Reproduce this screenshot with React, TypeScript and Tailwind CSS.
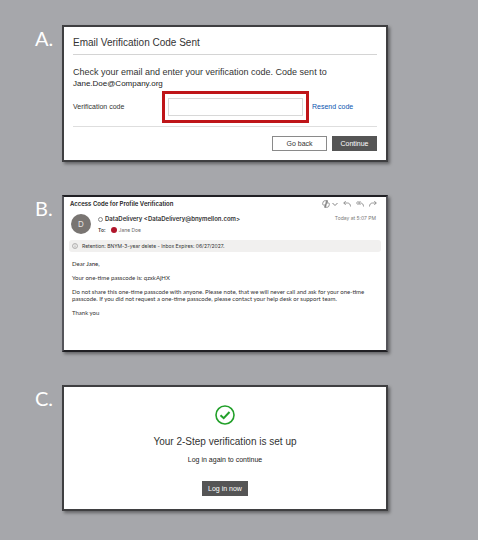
import React from "react";

const panelClass =
  "min-w-0 flex-1 border-2 bg-white shadow-[2px_2px_3px_rgba(0,0,0,0.4)]";

const bodyParagraphs = [
  "Your one-time passcode is: qzxkAjHX",
  "Do not share this one-time passcode with anyone. Please note, that we will never call and ask for your one-time passcode. If you did not request a one-time passcode, please contact your help desk or support team.",
  "Thank you",
];

type StepProps = {
  label: string;
  children: React.ReactNode;
};

const Step = ({ label, children }: StepProps) => (
  <section className="flex items-start">
    <h2 className="w-[27px] shrink-0 pt-px font-['Lato',sans-serif] text-[20px] leading-6 text-white">
      {label}
    </h2>
    {children}
  </section>
);

const CodeForm = () => (
  <form
    className={`${panelClass} border-[#3f3f41] px-[9px] pb-[9px] font-['Liberation_Sans',Arial,sans-serif] text-[#333333]`}
    onSubmit={(e) => e.preventDefault()}
  >
    <h3 className="border-b border-[#d4d4d4] pt-[10px] pb-[5px] text-[10px] leading-3">
      Email Verification Code Sent
    </h3>
    <p className="pt-3 text-[9px] leading-[11px]">
      Check your email and enter your verification code. Code sent to
    </p>
    <p className="text-[8px] leading-[11px] text-[#222222]">
      Jane.Doe@Company.org
    </p>
    <div className="flex items-center border-b border-[#dedede] pt-[2px] pb-[3px]">
      <label htmlFor="code" className="w-[89px] shrink-0 text-[7px]">
        Verification code
      </label>
      <div className="mr-[3px] min-w-0 flex-1 border-[3px] border-[#bf1519] px-[3px] py-1">
        <input
          id="code"
          type="text"
          className="block h-[18px] w-full border border-[#d8d8d8] px-1 text-[8px] outline-none"
        />
      </div>
      <a href="#resend" className="w-[65px] shrink-0 text-[7px] text-[#0a55b0]">
        Resend code
      </a>
    </div>
    <div className="flex justify-end gap-[5px] pt-[9px]">
      <button
        type="button"
        className="h-[15px] w-[55px] border border-[#8a8a8a] text-[7px] leading-3"
      >
        Go back
      </button>
      <button
        type="submit"
        className="h-[15px] w-[45px] bg-[#555555] text-[7px] leading-3 text-white"
      >
        Continue
      </button>
    </div>
  </form>
);

const MailActions = () => (
  <div className="flex items-center gap-[5px] text-[#777777]">
    <button type="button" aria-label="Copilot" className="flex items-center gap-[2px]">
      <svg className="size-2" viewBox="0 0 16 16" fill="none" stroke="currentColor" strokeWidth="1.5">
        <path d="M6 1.5h4.5L7 14.5H5.5L7 10H3C1 10 1 8 1.5 6.5L2.5 3.5C3 2 4 1.5 6 1.5Z" />
        <path d="M10 14.5H5.5L9 1.5h2L9.5 6H13c2 0 2 2 1.5 3.5L13.5 12.5C13 14 12 14.5 10 14.5Z" />
      </svg>
      <svg className="size-[6px]" viewBox="0 0 12 12" fill="none" stroke="currentColor" strokeWidth="1.8">
        <path d="M1 4l5 5 5-5" />
      </svg>
    </button>
    <button type="button" aria-label="Reply">
      <svg className="size-2" viewBox="0 0 16 16" fill="none" stroke="currentColor" strokeWidth="1.5">
        <path d="M5.5 2L1.5 6l4 4M1.5 6H9c4 0 6 3 6 7" />
      </svg>
    </button>
    <button type="button" aria-label="Reply all">
      <svg className="size-2" viewBox="0 0 16 16" fill="none" stroke="currentColor" strokeWidth="1.5">
        <path d="M5 2L1 6l4 4M9 2L5 6l4 4M5 6h4c4 0 6 3 6 7" />
      </svg>
    </button>
    <button type="button" aria-label="Forward">
      <svg className="size-2" viewBox="0 0 16 16" fill="none" stroke="currentColor" strokeWidth="1.5">
        <path d="M10.5 2l4 4-4 4M14.5 6H7c-4 0-6 3-6 7" />
      </svg>
    </button>
  </div>
);

const MailMessage = () => (
  <article
    className={`${panelClass} border-x-[#55555a] border-y-[#202024] px-[6px] pb-[34px] font-['Inter',sans-serif] text-[5px] leading-[7px] text-[#333333]`}
  >
    <header className="flex items-center justify-between pt-px pr-[3px]">
      <h3 className="text-[6px] leading-3 font-semibold text-[#222222]">
        Access Code for Profile Verification
      </h3>
      <MailActions />
    </header>
    <div className="flex items-start pt-[3px] pr-1 pl-px">
      <span className="mt-px flex size-5 shrink-0 items-center justify-center rounded-full bg-[#797572] text-[8px] text-[#e8e6e4]">
        D
      </span>
      <div className="min-w-0 flex-1 pl-[7px]">
        <p className="flex items-center gap-[2px] text-[6px] leading-3 font-semibold">
          <span className="size-[5px] rounded-full border border-[#888888]" />
          DataDelivery &lt;DataDelivery@bnymellon.com&gt;
        </p>
        <p className="flex items-center leading-[10px]">
          <span className="font-semibold">To:</span>
          <span className="mr-[2px] ml-[5px] size-[6px] rounded-full bg-[#b0152b]" />
          <span className="text-[#666666]">Jane Doe</span>
        </p>
      </div>
      <time className="shrink-0 pt-[2px] text-[#777777]">Today at 5:07 PM</time>
    </div>
    <p className="mt-[5px] -mx-px flex h-3 items-center gap-1 rounded-[3px] bg-[#f1f0ef] px-[3px]">
      <svg className="size-[6px]" viewBox="0 0 12 12" fill="none" stroke="#777777">
        <circle cx="6" cy="6" r="5" />
        <path d="M6 5v4M6 3v1" />
      </svg>
      Retention: BNYM-3-year delete - Inbox Expires: 06/27/2027.
    </p>
    <div className="space-y-[7px] pt-2 pr-2 pl-[2px] font-['Lato',sans-serif] text-[6px]">
      <p>
        Dear <span className="font-medium">Jane,</span>
      </p>
      {bodyParagraphs.map((text) => (
        <p key={text}>{text}</p>
      ))}
    </div>
  </article>
);

const SetupDone = () => (
  <div
    className={`${panelClass} flex flex-col items-center border-[#3f3f41] pt-[18px] pb-[13px] font-['Liberation_Sans',Arial,sans-serif]`}
  >
    <svg className="size-5" viewBox="0 0 20 20" fill="none" stroke="#22a02a">
      <circle cx="10" cy="10" r="9" strokeWidth="1.6" />
      <path d="M5.5 10.2L8.7 13.2L14.5 7" strokeWidth="2" />
    </svg>
    <h3 className="pt-[11px] text-[10px] leading-3 text-[#333333]">
      Your 2-Step verification is set up
    </h3>
    <p className="pt-[6px] text-[7px] leading-3 text-[#222222]">
      Log in again to continue
    </p>
    <button
      type="button"
      className="mt-[15px] h-[15px] w-[46px] bg-[#555555] text-[7px] leading-3 text-white"
    >
      Log in now
    </button>
  </div>
);

export default function App() {
  return (
    <main className="flex min-h-screen flex-col gap-[33px] bg-[#a6a7ab] pt-[25px] pr-[90px] pb-7 pl-[35px]">
      <Step label="A.">
        <CodeForm />
      </Step>
      <Step label="B.">
        <MailMessage />
      </Step>
      <Step label="C.">
        <SetupDone />
      </Step>
    </main>
  );
}
